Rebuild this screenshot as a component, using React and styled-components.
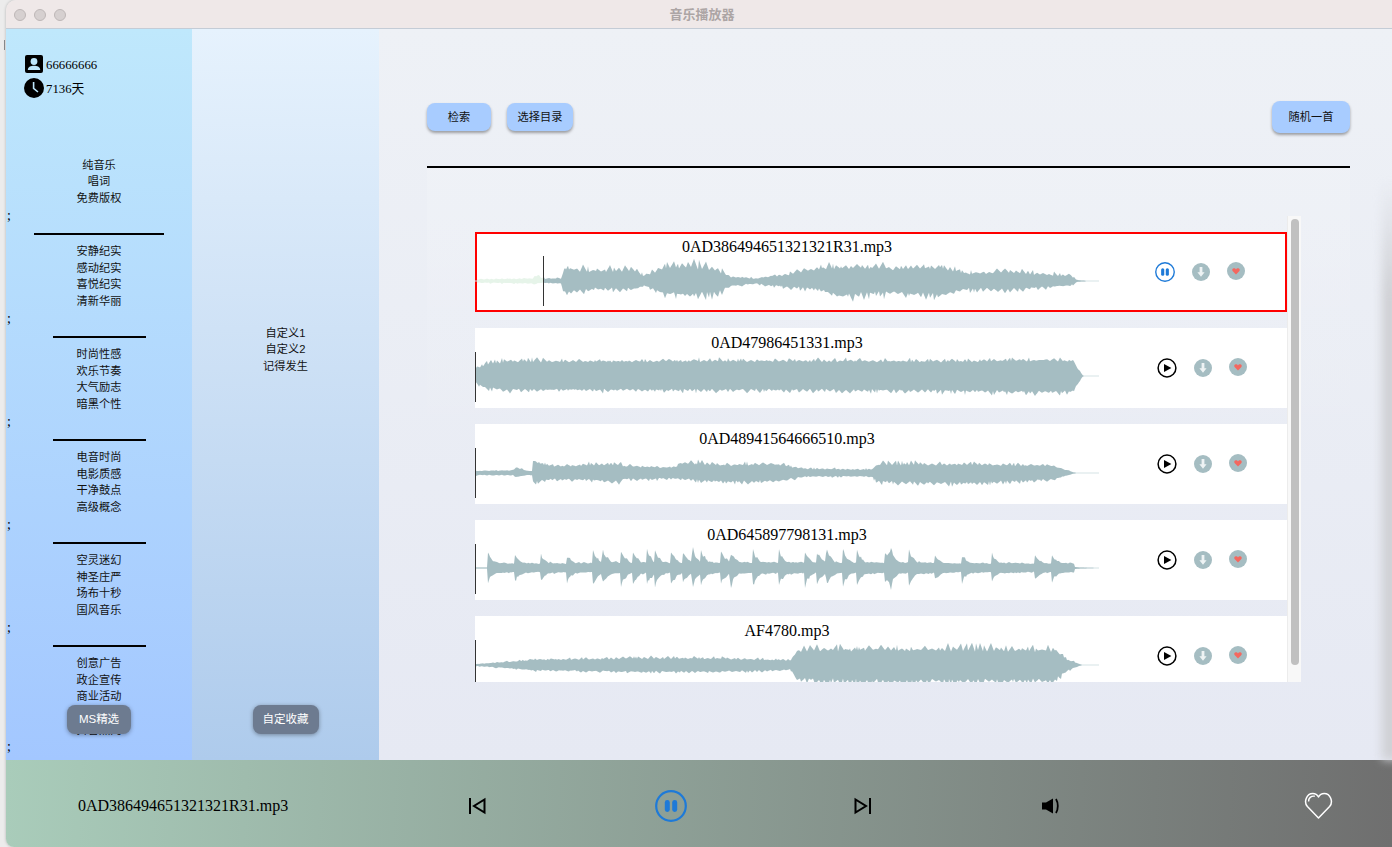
import React from 'react';
import styled, { createGlobalStyle } from 'styled-components';

const GlobalStyle = createGlobalStyle`
  html, body {
    margin: 0;
    height: 100%;
    overflow: hidden;
    background: #ececec;
  }
  * {
    box-sizing: border-box;
  }
`;

const SANS = '"Liberation Sans", "Noto Sans CJK SC", sans-serif';
const SERIF = '"Liberation Serif", "Noto Sans CJK SC", serif';
const WAVE = '#a5bdc2';
const BLUE = '#1e7ad8';

const Desktop = styled.div`
  display: flex;
  width: 1392px;
  height: 847px;
`;

const Backdrop = styled.div`
  width: 6px;
  padding: 40px 0 0 4px;
`;

const BackdropMark = styled.div`
  width: 1px;
  height: 10px;
  background: #8a8c8f;
`;

const Win = styled.div`
  display: flex;
  flex-direction: column;
  width: 1386px;
  height: 847px;
  border-radius: 10px 0 0 8px;
  overflow: hidden;
  box-shadow: 0 0 3px rgba(0, 0, 0, 0.25);
`;

const TitleBar = styled.div`
  display: grid;
  grid-template-columns: 1fr auto 1fr;
  align-items: center;
  height: 29px;
  padding: 1px 2px 0 8px;
  background: #efe8e8;
  border-bottom: 1px solid #c4ccd6;
`;

const Lights = styled.div`
  display: flex;
  gap: 8px;
`;

const Light = styled.span`
  width: 12px;
  height: 12px;
  border-radius: 50%;
  background: #d6d0d0;
  border: 1px solid #bdb7b7;
`;

const WinTitle = styled.div`
  margin-bottom: 2px;
  font: bold 13px ${SANS};
  color: #aca5a5;
`;

const Body = styled.div`
  display: flex;
  flex: 1;
  min-height: 0;
`;

const SidePanel = styled.div`
  position: relative;
  flex: none;
  width: ${p => p.$width}px;
  overflow: hidden;
  padding-top: ${p => p.$top}px;
  background: linear-gradient(180deg, ${p => p.$from}, ${p => p.$to});
`;

const UserInfo = styled.div`
  display: flex;
  flex-direction: column;
  gap: 4px;
  padding-left: 18px;
  margin-bottom: 58.7px;
`;

const UserRow = styled.div`
  display: flex;
  align-items: center;
  gap: 2px;
  height: 20px;
`;

const UserText = styled.span`
  margin-top: 2px;
  font: 12.8px/20px ${SERIF};
  color: #000;
`;

const MenuList = styled.div`
  text-align: center;
  font: 11.2px/16.67px ${SANS};
  color: #111;
`;

const Semi = styled.div`
  height: 26.33px;
  padding-left: 1px;
  font: 14px/18px ${SERIF};
  color: #000;
`;

const Divider = styled.div`
  width: ${p => p.$width}%;
  height: 2px;
  margin: 0 auto 8px;
  background: #000;
`;

const SideButton = styled.button`
  position: absolute;
  left: 50%;
  bottom: 26px;
  transform: translateX(-50%);
  height: 29px;
  width: ${p => p.$width}px;
  padding: 0 0 3px;
  border: none;
  border-radius: 8px;
  background: #6d7b90;
  color: #fff;
  font: 11.5px ${SANS};
  box-shadow: 0 1px 4px rgba(0, 0, 0, 0.35);
`;

const Main = styled.div`
  position: relative;
  flex: 1;
  padding: 72px 42px 0 48px;
  background: linear-gradient(180deg, #eef1f6, #e6e9f3);
`;

const EdgeShade = styled.div`
  position: absolute;
  top: 150px;
  right: -6px;
  bottom: 0;
  width: 16px;
  background: linear-gradient(180deg, rgba(207, 208, 212, 0), #cfd0d4 20%);
  filter: blur(5px);
`;

const Toolbar = styled.div`
  display: flex;
  align-items: center;
  justify-content: space-between;
  height: 32px;
  margin-bottom: 33px;
`;

const ToolGroup = styled.div`
  display: flex;
  gap: 16px;
`;

const ToolButton = styled.button`
  width: ${p => p.$width}px;
  height: ${p => p.$height}px;
  padding: 0 0 2px;
  border: none;
  border-radius: 8px;
  background: #a8ccff;
  color: #111;
  font: 11.2px ${SANS};
  box-shadow: 0 2px 3px rgba(0, 0, 0, 0.35);
`;

const Rule = styled.div`
  height: 2px;
  background: #000;
`;

const ListPanel = styled.div`
  height: 592px;
  padding: 48px 49px 0 48px;
  background: linear-gradient(180deg, rgba(255, 255, 255, 0.14), rgba(255, 255, 255, 0) 50%);
`;

const ListFrame = styled.div`
  display: flex;
  height: 466px;
  overflow: hidden;
`;

const Rows = styled.div`
  display: flex;
  flex-direction: column;
  gap: 16px;
  width: 812px;
  padding-top: 16px;
`;

const Track = styled.div`
  width: 14px;
  padding: 3px 2px 0 3px;
  background: #f8f8f8;
  border-left: 1px solid #ececec;
`;

const Thumb = styled.div`
  width: 8px;
  height: 446px;
  border-radius: 4px;
  background: #c0c0c0;
`;

const Row = styled.div`
  display: flex;
  align-items: center;
  flex: none;
  height: 80px;
  background: #fff;
  box-shadow: ${p => (p.$active ? 'inset 0 0 0 2px #f00' : 'none')};
`;

const WaveCol = styled.div`
  flex: none;
  width: 624px;
  height: 80px;
  padding-top: 6px;
`;

const SongName = styled.div`
  height: 18px;
  text-align: center;
  font: 16px/18px ${SERIF};
  color: #000;
`;

const WaveSvg = styled.svg`
  display: block;
  width: 624px;
  height: 50px;
`;

const Actions = styled.div`
  display: flex;
  align-items: center;
  gap: 17px;
  margin-left: ${p => (p.$active ? 56 : 58)}px;
`;

const IconSvg = styled.svg`
  display: block;
  flex: none;
  margin-top: ${p => p.$lift || 0}px;
  transform: ${p => (p.$flip ? 'scaleX(-1)' : 'none')};
`;

const Footer = styled.div`
  display: grid;
  grid-template-columns: 302px 194px 194px 190px 186px 100px 148px;
  align-items: center;
  justify-items: center;
  flex: none;
  height: 87px;
  padding: 4px 0 0 72px;
  background: linear-gradient(92deg, #a9ccba, #6f6f6f);
`;

const NowPlaying = styled.div`
  justify-self: start;
  font: 16px/20px ${SERIF};
  color: #000;
`;

const Gap = styled.div``;

const groups = [
  { items: ['纯音乐', '唱词', '免费版权'], rule: 70 },
  { items: ['安静纪实', '感动纪实', '喜悦纪实', '清新华丽'], rule: 50 },
  { items: ['时尚性感', '欢乐节奏', '大气励志', '暗黑个性'], rule: 50 },
  { items: ['电音时尚', '电影质感', '干净鼓点', '高级概念'], rule: 50 },
  { items: ['空灵迷幻', '神圣庄严', '场布十秒', '国风音乐'], rule: 50 },
  { items: ['创意广告', '政企宣传', '商业活动', '片头片尾', '抖音热门'] },
];

// env points: [x, amplitude above centre, amplitude below centre]
const spikes = [13, 40, 66, 92, 118, 128, 146, 158, 172, 180, 196, 208, 218, 226, 246, 256, 278, 304, 330, 342, 352, 368, 382, 410, 416, 434, 460, 487, 517, 560, 577];
const spikeEnv = () => {
  const pts = [[0, 0.5, 0.5], [12, 0.5, 0.5]];
  spikes.forEach((s, i) => {
    const next = spikes[i + 1] || 600;
    const inner = s >= 118 && s < 440;
    const big = inner ? 24 : 19;
    const base = inner ? 7.5 : 6.5;
    pts.push([s, big - (i % 4) * 2, big - (i % 3) * 3]);
    pts.push([s + 2, big * 0.62, big * 0.6]);
    if (next - s > 6) pts.push([Math.min(s + 8, next - 1), base, base]);
    if (next - s > 10) pts.push([next - 1, base - 1, base - 1.5]);
  });
  pts.push([592, 2, 2], [606, 0.6, 0.6], [624, 0, 0]);
  return pts;
};

const songs = [
  {
    name: '0AD386494651321321R31.mp3',
    active: true,
    center: 25,
    progress: 68,
    seed: 11,
    rough: 1,
    env: [[2, 2.5, 2.5], [58, 4, 4], [60, 9, 4], [68, 4, 3], [86, 4, 4], [90, 20, 19], [120, 17, 13], [160, 17, 13], [170, 8, 7], [188, 22, 20], [216, 24, 23], [240, 19, 19], [256, 7, 8], [280, 4, 4], [296, 8, 7], [312, 10, 9], [340, 21, 12], [364, 24, 25], [400, 21, 19], [440, 22, 22], [464, 24, 24], [492, 13, 13], [528, 15, 14], [596, 8, 7], [602, 1.5, 1.5], [610, 0.5, 0.5]],
  },
  {
    name: '0AD47986451331.mp3',
    center: 24,
    progress: 0,
    seed: 23,
    rough: 0.6,
    env: [[0, 8, 8], [10, 15, 15], [30, 19, 18], [300, 20, 18], [480, 19, 19], [570, 21, 21], [598, 20, 20], [604, 7, 7], [608, 0.5, 0.5]],
  },
  {
    name: '0AD48941564666510.mp3',
    center: 25,
    progress: 0,
    seed: 37,
    rough: 0.85,
    env: [[0, 3, 3], [38, 4, 3], [41, 9, 6], [52, 3, 3], [57, 3, 3], [58, 18, 14], [80, 10, 9], [112, 12, 10], [144, 13, 13], [150, 10, 9], [200, 8, 8], [206, 16, 9], [248, 12, 13], [300, 13, 12], [332, 6, 5], [396, 5, 5], [404, 13, 13], [492, 13, 15], [576, 11, 10], [592, 4, 4], [600, 0.5, 0.5]],
  },
  {
    name: '0AD645897798131.mp3',
    center: 24,
    progress: 0,
    seed: 41,
    rough: 0.55,
    env: spikeEnv(),
  },
  {
    name: 'AF4780.mp3',
    center: 25,
    progress: 0,
    seed: 59,
    rough: 0.85,
    env: [[2, 1.5, 1.5], [28, 4, 4], [60, 8, 8], [160, 10, 10], [240, 10, 10], [316, 7, 7], [322, 22, 22], [400, 24, 24], [580, 22, 23], [592, 8, 8], [606, 0.6, 0.6]],
  },
];

const makeRand = seed => {
  let s = seed;
  return () => {
    s = (s * 16807) % 2147483647;
    return s / 2147483647;
  };
};

const lerpEnv = (env, x) => {
  if (x <= env[0][0]) return [env[0][1], env[0][2]];
  for (let i = 1; i < env.length; i++) {
    if (x <= env[i][0]) {
      const [x0, u0, d0] = env[i - 1];
      const [x1, u1, d1] = env[i];
      const t = (x - x0) / (x1 - x0 || 1);
      return [u0 + (u1 - u0) * t, d0 + (d1 - d0) * t];
    }
  }
  return [0, 0];
};

// narrow peaks of uneven height over a low floor, with quieter and louder stretches
const makePeaks = (rand, length) => {
  const out = [];
  let from = 0.1;
  let rising = true;
  let loud = 1;
  while (out.length <= length) {
    if (rising && rand() < 0.12) loud = 0.6 + rand() * 0.4;
    const to = rising
      ? (rand() < 0.35 ? 0.85 + rand() * 0.15 : 0.3 + rand() * 0.45) * loud
      : rand() * 0.2;
    const run = 1 + Math.floor(rand() * 4);
    for (let i = 0; i < run; i++) out.push(from + (to - from) * ((i + 1) / run));
    from = to;
    rising = !rising;
  }
  return out;
};

const buildSamples = (song) => {
  const rand = makeRand(song.seed * 9973);
  const upper = makePeaks(rand, 622);
  const lower = makePeaks(rand, 622);
  const floor = 1 - song.rough * 0.5;
  const out = [];
  for (let x = 0; x <= 622; x++) {
    const [u, d] = lerpEnv(song.env, x);
    const upShape = floor + (1 - floor) * upper[x];
    const downShape = floor + (1 - floor) * lower[x];
    out.push([x, song.center - u * upShape, song.center + d * downShape]);
  }
  return out;
};

const slicePath = (samples, from, to) => {
  const part = samples.filter(s => s[0] >= from && s[0] <= to);
  if (!part.length) return '';
  const top = part.map(s => `${s[0]} ${s[1].toFixed(1)}`).join(' L');
  const bottom = [...part].reverse().map(s => `${s[0]} ${s[2].toFixed(1)}`).join(' L');
  return `M${top} L${bottom} Z`;
};

const Wave = ({ song }) => {
  const samples = buildSamples(song);
  const x = song.progress + 0.5;
  return (
    <WaveSvg viewBox="0 0 624 50">
      <line x1="0" x2="624" y1={song.center} y2={song.center} stroke="#d5e3e5" strokeWidth="1" />
      {song.progress > 0 && <path d={slicePath(samples, 2, song.progress)} fill="#e6f4e9" />}
      <path d={slicePath(samples, song.progress, 622)} fill={WAVE} />
      <line x1={x} x2={x} y1="0" y2="50" stroke="#333" strokeWidth="1" />
    </WaveSvg>
  );
};

const PauseIcon = ({ size }) => (
  <IconSvg width={size} height={size} viewBox="0 0 32 32">
    <circle cx="16" cy="16" r="14.8" fill="none" stroke={BLUE} strokeWidth="2.2" />
    <rect x="9.8" y="10" width="5" height="12" rx="2.4" fill={BLUE} />
    <rect x="17.2" y="10" width="5" height="12" rx="2.4" fill={BLUE} />
  </IconSvg>
);

const PlayIcon = () => (
  <IconSvg width="20" height="20" viewBox="0 0 20 20">
    <circle cx="10" cy="10" r="8.9" fill="none" stroke="#000" strokeWidth="1.5" />
    <path d="M7 6 L14.4 10 L7 14 Z" fill="#000" />
  </IconSvg>
);

const DownloadIcon = () => (
  <IconSvg width="18" height="18" viewBox="0 0 18 18">
    <circle cx="9" cy="9" r="9" fill={WAVE} />
    <path d="M7.6 4 H10.4 V9.2 H12.6 L9 13.8 L5.4 9.2 H7.6 Z" fill="#eef3f4" />
  </IconSvg>
);

const LikeIcon = () => (
  <IconSvg width="18" height="18" viewBox="0 0 18 18" $lift={-2}>
    <circle cx="9" cy="9" r="9" fill={WAVE} />
    <path d="M9 12.4 L5.8 9.2 C4.6 7.8 5.4 6.2 7 6.2 C7.9 6.2 8.6 6.7 9 7.4 C9.4 6.7 10.1 6.2 11 6.2 C12.6 6.2 13.4 7.8 12.2 9.2 Z" fill="#f4675f" />
  </IconSvg>
);

const PrevIcon = ({ flip }) => (
  <IconSvg width="20" height="20" viewBox="0 0 20 20" $flip={flip}>
    <rect x="2" y="2" width="2" height="16" fill="#000" />
    <path d="M17.5 3.5 V16.5 L7 10 Z" fill="none" stroke="#000" strokeWidth="2" strokeLinejoin="miter" />
  </IconSvg>
);

const VolumeIcon = () => (
  <IconSvg width="20" height="20" viewBox="0 0 20 20">
    <path d="M1 6.5 H5 L12 2.5 V17.5 L5 13.5 H1 Z" fill="#000" />
    <path d="M15 3 C17.4 7 17.4 13 15 17" fill="none" stroke="#000" strokeWidth="1.8" />
  </IconSvg>
);

const BigHeart = () => (
  <IconSvg width="29" height="29" viewBox="0 0 29 29">
    <path d="M14.5 27 L3.4 15.6 C-0.6 10.8 2.6 2.4 8.8 2.4 C11.2 2.4 13.4 3.8 14.5 6 C15.6 3.8 17.8 2.4 20.2 2.4 C26.4 2.4 29.6 10.8 25.6 15.6 Z" fill="none" stroke="#fff" strokeWidth="1.5" strokeLinejoin="round" />
    <path d="M4.6 10.5 C4.4 7.2 7 4.6 10.8 5.2" fill="none" stroke="#fff" strokeWidth="1.4" />
  </IconSvg>
);

const UserIcon = () => (
  <IconSvg width="20" height="18" viewBox="0 0 20 18">
    <rect x="1" y="0" width="18" height="18" rx="2" fill="#000" />
    <circle cx="10" cy="6.5" r="3.4" fill="#bde6fb" />
    <path d="M3.8 15 C4 11.6 7 10.8 10 10.8 C13 10.8 16 11.6 16.2 15 Z" fill="#bde6fb" />
  </IconSvg>
);

const ClockIcon = () => (
  <IconSvg width="20" height="20" viewBox="0 0 20 20">
    <circle cx="10" cy="10" r="10" fill="#000" />
    <path d="M9.6 4 V10.4 L14 14" fill="none" stroke="#bde6fb" strokeWidth="1.6" />
  </IconSvg>
);

const App = () => (
  <Desktop>
    <GlobalStyle />
    <Backdrop>
      <BackdropMark />
    </Backdrop>
    <Win>
      <TitleBar>
        <Lights>
          <Light />
          <Light />
          <Light />
        </Lights>
        <WinTitle>音乐播放器</WinTitle>
      </TitleBar>
      <Body>
        <SidePanel $width={186} $top={25} $from="#bfe8fc" $to="#a3c7ff">
          <UserInfo>
            <UserRow><UserIcon /><UserText>66666666</UserText></UserRow>
            <UserRow><ClockIcon /><UserText>7136天</UserText></UserRow>
          </UserInfo>
          {groups.map(group => (
            <React.Fragment key={group.items[0]}>
              <MenuList>
                {group.items.map(item => <div key={item}>{item}</div>)}
              </MenuList>
              <Semi>;</Semi>
              {group.rule && <Divider $width={group.rule} />}
            </React.Fragment>
          ))}
          <SideButton $width={64}>MS精选</SideButton>
        </SidePanel>
        <SidePanel $width={187} $top={295.7} $from="#e6f2fd" $to="#aecbec">
          <MenuList>
            <div>自定义1</div>
            <div>自定义2</div>
            <div>记得发生</div>
          </MenuList>
          <SideButton $width={66}>自定收藏</SideButton>
        </SidePanel>
        <Main>
          <Toolbar>
            <ToolGroup>
              <ToolButton $width={64} $height={28}>检索</ToolButton>
              <ToolButton $width={66} $height={28}>选择目录</ToolButton>
            </ToolGroup>
            <ToolButton $width={78} $height={32}>随机一首</ToolButton>
          </Toolbar>
          <Rule />
          <ListPanel>
            <ListFrame>
              <Rows>
                {songs.map(song => (
                  <Row key={song.name} $active={song.active}>
                    <WaveCol>
                      <SongName>{song.name}</SongName>
                      <Wave song={song} />
                    </WaveCol>
                    <Actions $active={song.active}>
                      {song.active ? <PauseIcon size={20} /> : <PlayIcon />}
                      <DownloadIcon />
                      <LikeIcon />
                    </Actions>
                  </Row>
                ))}
              </Rows>
              <Track>
                <Thumb />
              </Track>
            </ListFrame>
          </ListPanel>
          <EdgeShade />
        </Main>
      </Body>
      <Footer>
        <NowPlaying>0AD386494651321321R31.mp3</NowPlaying>
        <PrevIcon />
        <PauseIcon size={32} />
        <PrevIcon flip />
        <VolumeIcon />
        <Gap />
        <BigHeart />
      </Footer>
    </Win>
  </Desktop>
);

export default App;
